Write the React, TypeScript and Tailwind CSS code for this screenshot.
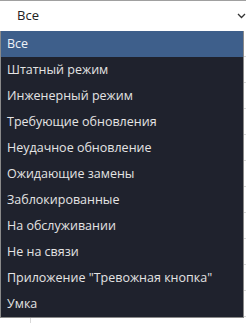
import React from "react";

const items = [
  "Все",
  "Штатный режим",
  "Инженерный режим",
  "Требующие обновления",
  "Неудачное обновление",
  "Ожидающие замены",
  "Заблокированные",
  "На обслуживании",
  "Не на связи",
  'Приложение "Тревожная кнопка"',
  "Умка",
];

export default function App() {
  return (
    <div
      className="relative w-[246px] h-[323px] bg-white overflow-hidden"
      style={{ fontFamily: '"Open Sans", "Noto Sans", sans-serif' }}
    >
      {/* select box */}
      <div className="flex items-center h-[31px] w-[260px] border-t border-[#a0a0a0] bg-white pl-[17px] pr-[20px] text-[13px] text-[#222]">
        <span className="flex-1">Все</span>
        <svg width="9" height="6" viewBox="0 0 9 6" className="mr-[-6px]">
          <path d="M1 1l3.5 3.5L8 1" fill="none" stroke="#333" strokeWidth="1.3" />
        </svg>
      </div>
      {/* background table behind */}
      <div className="flex flex-col">
        {Array.from({ length: 12 }).map((_, i) => (
          <div key={i} className="h-[26px] border-b border-[#d8d8d8] flex">
            <div className="w-[31px] border-r border-[#d8d8d8]" />
          </div>
        ))}
      </div>
      {/* dropdown list */}
      <div className="absolute left-0 top-[31px] w-[244px] border border-t-0 border-[#8a8a8a] bg-[#1f222d] flex flex-col text-[12.5px] text-[#e4e4e4]">
        {items.map((t, i) => (
          <div
            key={t}
            className={
              "h-[26px] flex items-center pl-[6px] whitespace-nowrap " +
              (i === 0 ? "bg-[#3e5f8b] text-[#eef2f7]" : "")
            }
          >
            {t}
          </div>
        ))}
      </div>
    </div>
  );
}
